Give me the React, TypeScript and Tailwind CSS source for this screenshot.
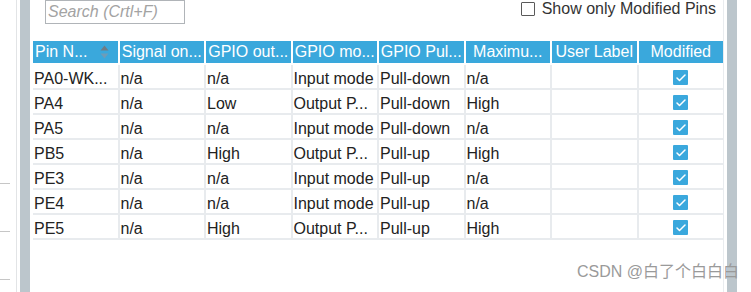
import { Fragment } from "react";
import { Check } from "lucide-react";

type Pin = {
  name: string;
  signal: string;
  out: string;
  mode: string;
  pull: string;
  speed: string;
};

const columns = ["Pin N...", "Signal on...", "GPIO out...", "GPIO mo...", "GPIO Pul...", "Maximu...", "User Label", "Modified"];

const pins: Pin[] = [
  { name: "PA0-WK...", signal: "n/a", out: "n/a", mode: "Input mode", pull: "Pull-down", speed: "n/a" },
  { name: "PA4", signal: "n/a", out: "Low", mode: "Output P...", pull: "Pull-down", speed: "High" },
  { name: "PA5", signal: "n/a", out: "n/a", mode: "Input mode", pull: "Pull-down", speed: "n/a" },
  { name: "PB5", signal: "n/a", out: "High", mode: "Output P...", pull: "Pull-up", speed: "High" },
  { name: "PE3", signal: "n/a", out: "n/a", mode: "Input mode", pull: "Pull-up", speed: "n/a" },
  { name: "PE4", signal: "n/a", out: "n/a", mode: "Input mode", pull: "Pull-up", speed: "n/a" },
  { name: "PE5", signal: "n/a", out: "High", mode: "Output P...", pull: "Pull-up", speed: "High" },
];

function SortIcon() {
  return (
    <svg width="9" height="14" viewBox="0 0 9 14" className="shrink-0">
      <path d="M4.5 0.5 L8.5 5.5 L0.5 5.5 Z" fill="#6f7c85" />
      <path d="M0.5 8.5 L8.5 8.5 L4.5 13.5 Z" fill="#6e9cb8" />
    </svg>
  );
}

function Tick() {
  return (
    <div className="flex h-[23px] items-center justify-center bg-white pt-[2px]">
      <div className="flex h-[15px] w-[15px] items-center justify-center rounded-[1px] bg-[#3aa8dd]">
        <Check size={12} strokeWidth={3} className="text-white" />
      </div>
    </div>
  );
}

export default function App() {
  return (
    <div className="relative flex h-[292px] w-[751px] overflow-hidden bg-white font-['Liberation_Sans',Arial,sans-serif] text-[16px] text-[#222]">
      {/* left ruler strip */}
      <div className="flex w-[20px] shrink-0">
        <div className="flex w-[17px] flex-col border-r border-[#e2e4e6]">
          <div className="mt-[183px] h-px w-[10px] bg-[#c6c6c6]" />
          <div className="mt-[47px] h-px w-[10px] bg-[#c6c6c6]" />
          <div className="mt-[47px] h-px w-[10px] bg-[#c6c6c6]" />
        </div>
      </div>
      <div className="w-[10px] shrink-0 bg-[#bcc6cc]" />

      <div className="w-[694px] shrink-0 border-r border-[#e9ecef] pl-[3px]">
        <div className="flex h-[41px] items-start justify-between">
          <div className="ml-[12px] flex h-[24px] w-[140px] items-center border border-[#b0b4b8] pl-[2px] italic text-[#a3a3a3]">
            Search (Crtl+F)
          </div>
          <label className="mr-[7px] mt-[2px] flex items-center gap-[7px] leading-[14px] text-[#333]">
            <span className="h-[14px] w-[14px] rounded-[1px] border-[1.5px] border-[#5a5a5a] bg-white" />
            Show only Modified Pins
          </label>
        </div>

        <div className="w-[690px]">
          <div className="grid grid-cols-8 gap-x-[2px]">
            {columns.map((c, i) =>
              i === 0 ? (
                <div key={c} className="flex h-[22px] items-center justify-between bg-[#3aa8dc] pl-[2px] pr-[9px] leading-[22px] text-white">
                  <span>{c}</span>
                  <SortIcon />
                </div>
              ) : (
                <div key={c} className="h-[22px] overflow-hidden whitespace-nowrap bg-[#3aa8dc] text-center leading-[22px] text-white">
                  {c}
                </div>
              ),
            )}
          </div>

          <div className="mt-[2px] grid grid-cols-8 gap-[2px] bg-[#e8ebee] pb-[2px]">
            {pins.map((p) => (
              <Fragment key={p.name}>
                {[p.name, p.signal, p.out, p.mode, p.pull, p.speed, ""].map((v, j) => (
                  <div key={j} className="h-[23px] overflow-hidden whitespace-nowrap bg-white pl-[1px] pt-[2px] leading-[23px]">
                    {v}
                  </div>
                ))}
                <Tick />
              </Fragment>
            ))}
          </div>
        </div>
      </div>

      <div className="w-[3px] shrink-0" />
      <div className="w-[10px] shrink-0 bg-[#bcc6cc]" />

      <div className="absolute left-[577px] top-[262px] whitespace-nowrap font-['Liberation_Sans','Noto_Sans_CJK_SC',sans-serif] text-[16px] leading-[20px] text-[#9a9a9a]">
        CSDN @白了个白白白
      </div>
    </div>
  );
}
